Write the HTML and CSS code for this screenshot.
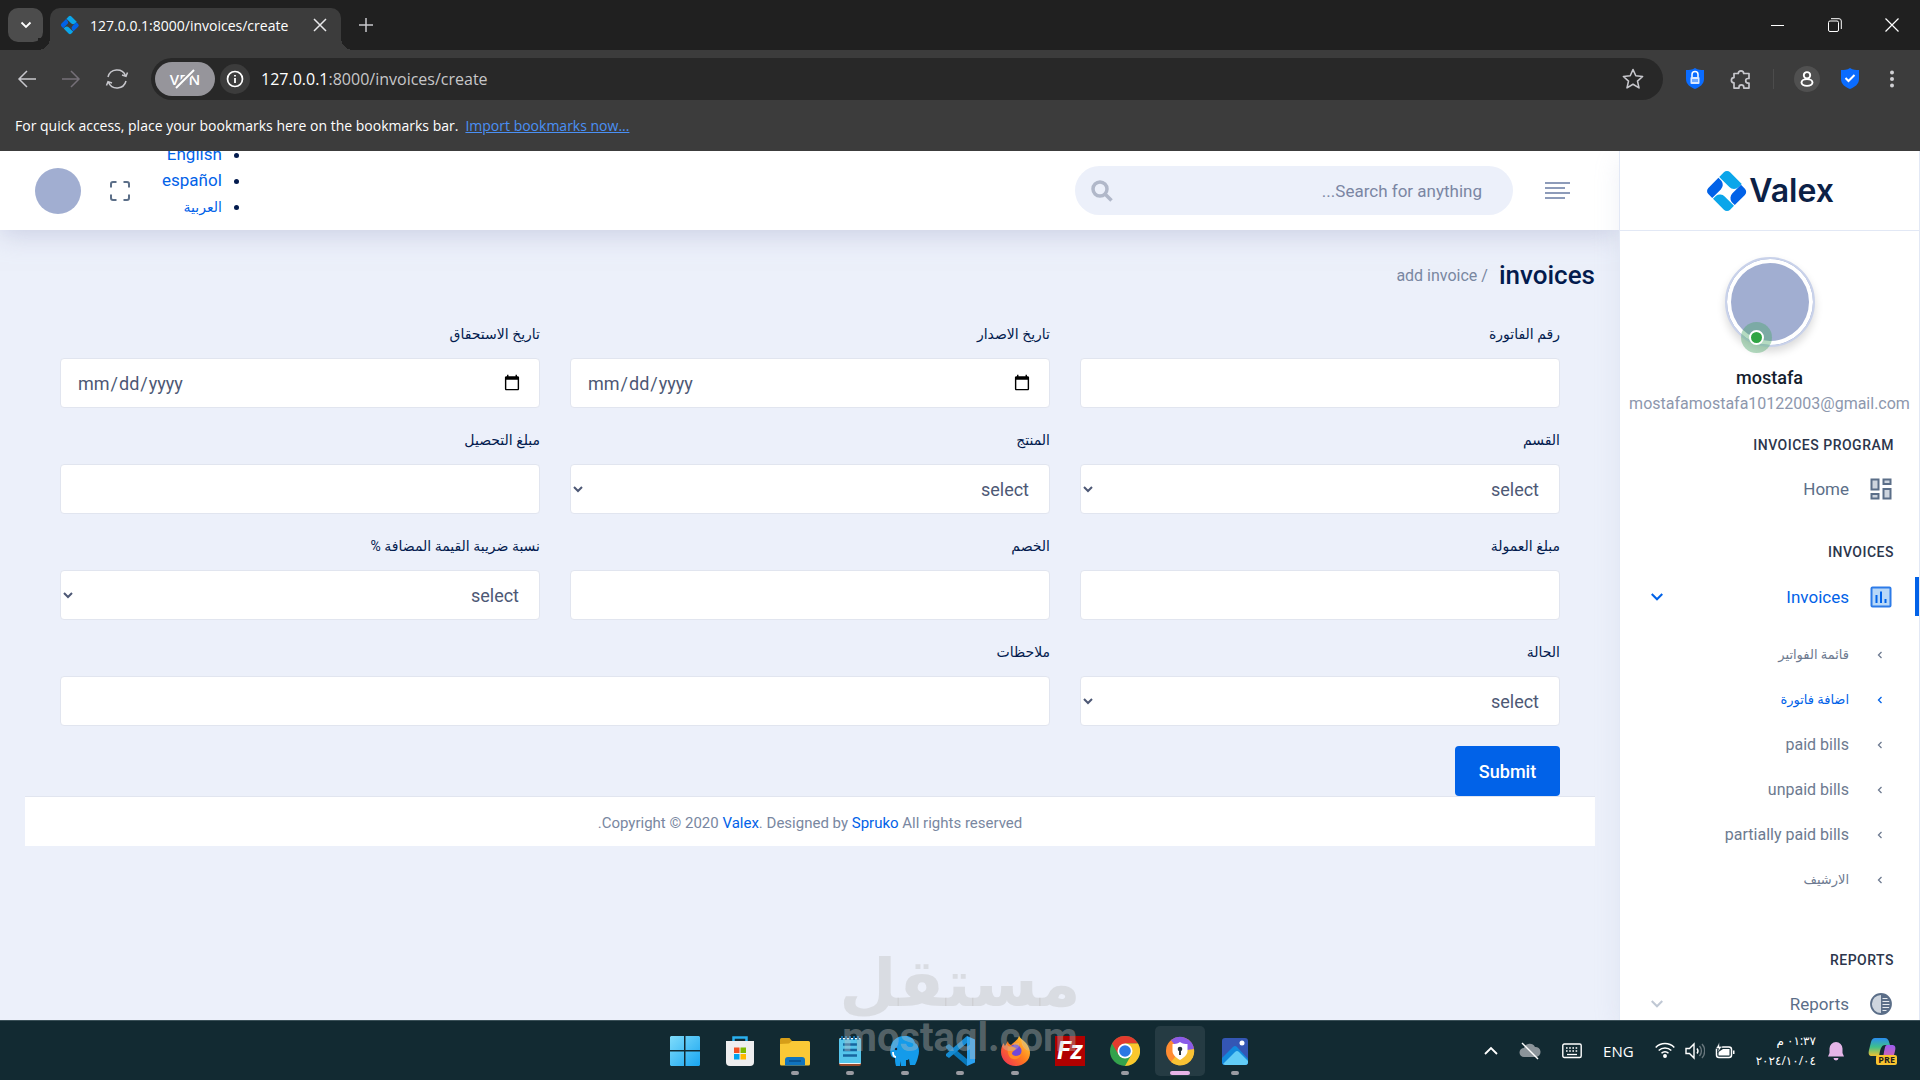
FILE: index.html
```html
<!DOCTYPE html>
<html lang="en">
<head>
    <meta charset="UTF-8">
    <meta name="viewport" content="width=device-width, initial-scale=1.0">
    <title>Invoices - Create</title>
    <link rel="stylesheet" href="styles.css">
</head>
<body>
    <svg class="defs" width="0" height="0" aria-hidden="true">
        <symbol id="valex" viewBox="0 0 40 40">
            <g transform="rotate(45 20 20)">
                <path fill="#0ba6ea" d="M10 6h15v4a6 6 0 0 1-6 6H6v-6a4 4 0 0 1 4-4z"/>
                <path fill="#0162e8" d="M25 7h5a4 4 0 0 1 4 4v13h-4a6 6 0 0 1-5-6z"/>
                <path fill="#0ba6ea" d="M34 25v5a4 4 0 0 1-4 4H16v-4a6 6 0 0 1 6-5z"/>
                <path fill="#0162e8" d="M6 17h4a6 6 0 0 1 5 6v11h-5a4 4 0 0 1-4-4z"/>
            </g>
        </symbol>
        <symbol id="chev-down" viewBox="0 0 12 12">
            <path d="M1.500 3.500 6 8l4.500-4.500" fill="none" stroke="currentColor" stroke-width="1.800"/>
        </symbol>
        <symbol id="chev-side" viewBox="0 0 6 10">
            <path d="M4.500 2 1.500 5l3 3" fill="none" stroke="currentColor" stroke-width="1.300"/>
        </symbol>
    </svg>

    <div class="browser">
        <div class="tab-strip">
            <button class="tab-menu" aria-label="Search tabs">
                <svg width="12" height="12"><use href="#chev-down"/></svg>
            </button>
            <div class="tab">
                <svg width="20" height="20"><use href="#valex"/></svg>
                <span>127.0.0.1:8000/invoices/create</span>
                <button aria-label="Close tab">
                    <svg width="14" height="14" viewBox="0 0 14 14"><path d="M1 1l12 12M13 1 1 13" stroke="#e8e8ea" stroke-width="1.500"/></svg>
                </button>
            </div>
            <button class="new-tab" aria-label="New tab">
                <svg width="14" height="14" viewBox="0 0 14 14"><path d="M7 0v14M0 7h14" stroke="#c8c8cc" stroke-width="1.500"/></svg>
            </button>
            <div class="window-controls">
                <button aria-label="Minimize"><svg width="14" height="14" viewBox="0 0 14 14"><path d="M0 7.500h13" stroke="#fff"/></svg></button>
                <button aria-label="Restore"><svg width="14" height="14" viewBox="0 0 14 14" fill="none" stroke="#fff"><rect x=".5" y="3" width="10" height="10.500" rx="1.500"/><path d="M3 .7h8a2.300 2.300 0 0 1 2.300 2.300v8"/></svg></button>
                <button aria-label="Close"><svg width="14" height="14" viewBox="0 0 14 14"><path d="M.5.5l13 13M13.500.5l-13 13" stroke="#fff" stroke-width="1.200"/></svg></button>
            </div>
        </div>
        <div class="toolbar">
            <div class="nav-buttons">
                <button aria-label="Back"><svg width="20" height="20" viewBox="0 0 20 20" fill="none" stroke="#c7c7cc" stroke-width="1.500"><path d="M19 10H2M10 2l-8 8 8 8"/></svg></button>
                <button aria-label="Forward"><svg width="20" height="20" viewBox="0 0 20 20" fill="none" stroke="#757078" stroke-width="1.500"><path d="M1 10h17M10 2l8 8-8 8"/></svg></button>
                <button aria-label="Reload"><svg width="24" height="24" viewBox="0 0 24 24" fill="none" stroke="#c7c7cc" stroke-width="1.500"><path d="M3 10a9.300 9.300 0 0 1 17.500-1.500M21 14a9.300 9.300 0 0 1-17.500 1.500M22.500 5.500 21 9.300 17 8M1.500 18.500 3 14.700 7 16"/></svg></button>
            </div>
            <div class="omnibox">
                <button class="vpn" aria-label="VPN is off">VPN
                    <svg class="vpn-slash" width="26" height="22" viewBox="0 0 26 22"><path d="M4 20 22 2" stroke="#96959b" stroke-width="5"/><path d="M4 20 22 2" stroke="#fff" stroke-width="2"/></svg>
                </button>
                <button class="site-info" aria-label="Site information">
                    <svg width="18" height="18" viewBox="0 0 18 18"><circle cx="9" cy="9" r="7.500" fill="none" stroke="#fff" stroke-width="1.700"/><path d="M9 8v5M9 5v1.600" stroke="#fff" stroke-width="1.800"/></svg>
                </button>
                <span class="url"><b>127.0.0.1</b>:8000/invoices/create</span>
                <svg class="star" width="24" height="24" viewBox="0 0 24 24"><path d="M12 2.500l2.800 6.300 6.800.7-5.100 4.600 1.500 6.800L12 17.300l-6 3.600 1.500-6.800L2.400 9.500l6.800-.7z" fill="none" stroke="#c7c7cc" stroke-width="1.600" stroke-linejoin="round"/></svg>
            </div>
            <div class="extensions">
                <svg width="20" height="22" viewBox="0 0 20 22"><path d="M10 0c3 2 6 2 9 2v9c0 5-4 8-9 10-5-2-9-5-9-10V2c3 0 6 0 9-2z" fill="#0a6cff"/><path d="M7 9V6.500a3 3 0 0 1 6 0V9" fill="none" stroke="#fff" stroke-width="1.500"/><rect x="5.500" y="9" width="9" height="7" rx="1" fill="#dce9ff"/><path d="M8 11v3M10 11v3M12 11v3" stroke="#0a6cff"/></svg>
                <svg class="puzzle" width="24" height="24" viewBox="0 0 24 24"><path d="M5 6.500h4.300a2.700 2.700 0 1 1 5.400 0H20v5h-1a2.300 2.300 0 0 0 0 4.600h1v5h-5.200v-.8a2.400 2.400 0 0 0-4.800 0v.8H5v-5.300a2.600 2.600 0 1 1 0-5.200z" fill="none" stroke="#c7c7cc" stroke-width="1.700" stroke-linejoin="round"/></svg>
                <i class="separator"></i>
                <span class="profile"><svg width="14" height="16" viewBox="0 0 14 16" fill="none" stroke="#fff" stroke-width="1.900"><circle cx="7" cy="4.300" r="3.200"/><ellipse cx="7" cy="11.500" rx="5.500" ry="3.400"/></svg></span>
                <svg width="20" height="22" viewBox="0 0 20 22"><path d="M10 0c3 2 6 2 9 2v9c0 5-4 8-9 10-5-2-9-5-9-10V2c3 0 6 0 9-2z" fill="#0a6cff"/><path d="M5.500 10l3 3 6-6" fill="none" stroke="#fff" stroke-width="2"/></svg>
                <svg class="kebab" width="4" height="18" viewBox="0 0 4 18" fill="#d0d0d4"><circle cx="2" cy="2.500" r="2"/><circle cx="2" cy="9" r="2"/><circle cx="2" cy="15.500" r="2"/></svg>
            </div>
        </div>
        <div class="bookmarks">
            <span>For quick access, place your bookmarks here on the bookmarks bar.</span>
            <a href="#">Import bookmarks now...</a>
        </div>
    </div>

    <div class="app" dir="rtl">
        <aside class="sidebar">
            <a class="logo" href="#" dir="ltr">
                <svg width="44" height="44"><use href="#valex"/></svg>
                <span>Valex</span>
            </a>
            <div class="user">
                <div class="user-avatar"><span class="status"></span></div>
                <h4>mostafa</h4>
                <span class="email">mostafamostafa10122003@gmail.com</span>
            </div>
            <nav class="side-menu">
                <h3>Invoices Program</h3>
                <a class="item" href="#">
                    <svg width="22" height="22" viewBox="0 0 22 22" fill="#ced5de" stroke="#5b6e88" stroke-width="2"><path d="M1.500 1.500h7v10h-7zM13.500 1.500h7v4.500h-7zM13.500 11h7v9.500h-7zM1.500 16h7v4.500h-7z"/></svg>
                    <span>Home</span>
                </a>
                <h3>Invoices</h3>
                <a class="item active" href="#">
                    <svg width="22" height="22" viewBox="0 0 22 22"><rect x="1.500" y="1.500" width="19" height="19" rx="1" fill="#b8d8f8" stroke="#2c7be8" stroke-width="2"/><path d="M6.500 9v8M11 5.500V17M15.500 13v4" stroke="#0162e8" stroke-width="2"/></svg>
                    <span>Invoices</span>
                    <svg class="toggle" width="14" height="14"><use href="#chev-down"/></svg>
                </a>
                <ul>
                    <li><a class="ar" href="#"><svg width="6" height="10"><use href="#chev-side"/></svg>قائمة الفواتير</a></li>
                    <li><a class="ar current" href="#"><svg width="6" height="10"><use href="#chev-side"/></svg>اضافة فاتورة</a></li>
                    <li><a href="#"><svg width="6" height="10"><use href="#chev-side"/></svg>paid bills</a></li>
                    <li><a href="#"><svg width="6" height="10"><use href="#chev-side"/></svg>unpaid bills</a></li>
                    <li><a href="#"><svg width="6" height="10"><use href="#chev-side"/></svg>partially paid bills</a></li>
                    <li><a class="ar" href="#"><svg width="6" height="10"><use href="#chev-side"/></svg>الارشيف</a></li>
                </ul>
                <h3>Reports</h3>
                <a class="item" href="#">
                    <svg width="22" height="22" viewBox="0 0 22 22"><circle cx="11" cy="11" r="10" fill="#ced5de"/><path d="M11 1a10 10 0 0 1 0 20z" fill="#5b6e88"/><path d="M12.500 5.500h5M12.500 8.500h7M12.500 11.500h7M12.500 14.500h7M12.500 17.500h4" stroke="#e6eaef" stroke-width="1.200"/><circle cx="11" cy="11" r="10" fill="none" stroke="#5b6e88" stroke-width="1.800"/></svg>
                    <span>Reports</span>
                    <svg class="toggle" width="14" height="14"><use href="#chev-down"/></svg>
                </a>
            </nav>
        </aside>

        <div class="main">
            <header class="main-header">
                <button class="menu-toggle" aria-label="Toggle menu">
                    <svg width="26" height="20" viewBox="0 0 26 20"><path d="M0 2h25M0 7h20M0 12h25M0 17h20" stroke="#8d9bb9" stroke-width="2"/></svg>
                </button>
                <div class="search">
                    <input type="search" placeholder="Search for anything..." aria-label="Search for anything">
                    <svg width="22" height="22" viewBox="0 0 22 22" fill="none" stroke="#b1b8c9" stroke-width="3.500"><circle cx="9" cy="9" r="7"/><path d="M14 14l6.500 6.500"/></svg>
                </div>
                <ul class="languages">
                    <li><a href="#">English</a></li>
                    <li><a href="#">español</a></li>
                    <li><a class="ar" href="#">العربية</a></li>
                </ul>
                <button class="fullscreen" aria-label="Full screen">
                    <svg width="22" height="22" viewBox="0 0 22 22" fill="none" stroke="#5b6e88" stroke-width="2"><path d="M7.500 2H4a2 2 0 0 0-2 2v3.500M14.500 2H18a2 2 0 0 1 2 2v3.500M20 14.500V18a2 2 0 0 1-2 2h-3.500M7.500 20H4a2 2 0 0 1-2-2v-3.500"/></svg>
                </button>
                <span class="header-avatar"></span>
            </header>

            <main class="content">
                <div class="breadcrumb">
                    <h1>invoices</h1>
                    <span>/ add invoice</span>
                </div>
                <form class="invoice-form">
                    <div class="field">
                        <label for="number">رقم الفاتورة</label>
                        <input type="text" id="number">
                    </div>
                    <div class="field">
                        <label for="invoice-date">تاريخ الاصدار</label>
                        <input type="date" id="invoice-date" dir="ltr">
                    </div>
                    <div class="field">
                        <label for="due-date">تاريخ الاستحقاق</label>
                        <input type="date" id="due-date" dir="ltr">
                    </div>
                    <div class="field">
                        <label for="section">القسم</label>
                        <select id="section"><option>select</option></select>
                    </div>
                    <div class="field">
                        <label for="product">المنتج</label>
                        <select id="product"><option>select</option></select>
                    </div>
                    <div class="field">
                        <label for="collection">مبلغ التحصيل</label>
                        <input type="text" id="collection">
                    </div>
                    <div class="field">
                        <label for="commission">مبلغ العمولة</label>
                        <input type="text" id="commission">
                    </div>
                    <div class="field">
                        <label for="discount">الخصم</label>
                        <input type="text" id="discount">
                    </div>
                    <div class="field">
                        <label for="vat">نسبة ضريبة القيمة المضافة %</label>
                        <select id="vat"><option>select</option></select>
                    </div>
                    <div class="field">
                        <label for="status">الحالة</label>
                        <select id="status"><option>select</option></select>
                    </div>
                    <div class="field wide">
                        <label for="note">ملاحظات</label>
                        <input type="text" id="note">
                    </div>
                    <button class="submit" type="submit">Submit</button>
                </form>
                <footer>Copyright © 2020 <a href="#">Valex</a>. Designed by <a href="#">Spruko</a> All rights reserved.</footer>
            </main>
        </div>
    </div>

    <div class="taskbar">
        <div class="apps">
            <button aria-label="Start"><svg width="30" height="30" viewBox="0 0 30 30"><defs><linearGradient id="win" x2="1" y2="1"><stop stop-color="#7fdcfb"/><stop offset="1" stop-color="#18a5f0"/></linearGradient></defs><path fill="url(#win)" d="M1 0h13v14H0V1zM15.500 0H29l1 1v13H15.500zM0 15.500h14V30H1l-1-1zM15.500 15.500H30V29l-1 1H15.500z"/></svg></button>
            <button aria-label="Store"><svg width="30" height="30" viewBox="0 0 30 30"><path d="M8.500 6V1.500h13V6" fill="none" stroke="#2ab0ee" stroke-width="2.500"/><path d="M1 5h28v21a4 4 0 0 1-4 4H5a4 4 0 0 1-4-4z" fill="#eeeeef"/><path fill="#f25022" d="M9 11.500h5.500V17H9z"/><path fill="#7fba00" d="M15.500 11.500H21V17h-5.500z"/><path fill="#00a4ef" d="M9 18h5.500v5.500H9z"/><path fill="#ffb900" d="M15.500 18H21v5.500h-5.500z"/></svg></button>
            <button class="running" aria-label="File Explorer"><svg width="30" height="30" viewBox="0 0 30 30"><path d="M0 3.500A1.500 1.500 0 0 1 1.500 2h8L12 5v3H0z" fill="#d69e18"/><path d="M0 8l9-.5L12 5h16.500A1.500 1.500 0 0 1 30 6.500V28a1.500 1.500 0 0 1-1.500 1.500h-27A1.500 1.500 0 0 1 0 28z" fill="#fac936"/><path d="M5 29.500V24a3 3 0 0 1 3-3h14a3 3 0 0 1 3 3v5.500z" fill="#1074bd"/><path d="M9 25h12" stroke="#094e8a" stroke-width="1.500"/></svg></button>
            <button class="running" aria-label="Notepad"><svg width="30" height="30" viewBox="0 0 30 30"><path d="M4 27h22v1a2 2 0 0 1-2 2H6a2 2 0 0 1-2-2z" fill="#9a4a2c"/><rect x="4" y="2" width="22" height="26" rx="1.500" fill="#f4f4f4"/><path d="M4 3h22v24H4z" fill="#55c5ec"/><path d="M8 8.500h14M8 14h14M8 19.500h14" stroke="#17659f" stroke-width="2.500"/><path d="M7 0v4M11 0v4M15 0v4M19 0v4M23 0v4" stroke="#126ba5" stroke-width="2"/></svg></button>
            <button class="running" aria-label="Database"><svg width="30" height="30" viewBox="0 0 30 30"><path fill="#149bea" d="M14 0c6-1 10 3 11 7 4 2 5 8 3 14-1 4-2 6-3 8h-5l-1-6c-1 1-2 1-3 1v6h-5l-1-5v5H6c-1-3-1-6-1-8-4 0-6-5-4-11C1 6 6 0 14 0z"/><path d="M3 16c0 3 1 5 3 5" fill="none" stroke="#fff" stroke-width="1.800"/><circle cx="6" cy="13" r="1.200" fill="#123"/></svg></button>
            <button class="running" aria-label="Visual Studio Code"><svg width="30" height="30" viewBox="0 0 30 30"><path d="M1 10l3-2 18 15v7L1 12z" fill="#0877b9"/><path d="M1 20l3 2L22 7V0L1 18z" fill="#158bd2"/><path d="M22 0l8 3.500v23L22 30z" fill="#2ba1f1"/></svg></button>
            <button class="running" aria-label="Firefox"><svg width="30" height="30" viewBox="0 0 30 30"><defs><linearGradient id="fox" x1="1" x2="0" y2="1"><stop stop-color="#ffe336"/><stop offset=".5" stop-color="#ff7a1e"/><stop offset="1" stop-color="#ee255d"/></linearGradient></defs><path fill="url(#fox)" d="M19 0c2 3 4 4 7 7 3 4 4 7 4 10 0 8-7 13-14.500 13S1 24 1 16c0-4 1-7 3-9 0 1 0 2 1 3l3-5c0 2 1 3 3 4 3-3 7-5 8-9z"/><circle cx="15" cy="15" r="6.500" fill="#7148d8"/><path d="M8 11c3-2 5 0 8 1-1 3-4 3-4 6 2 3 7 2 9 0-1 6-9 7-12 2-1-3-2-6-1-9z" fill="#ff8b24"/></svg></button>
            <button aria-label="FileZilla"><span class="filezilla">Fz</span></button>
            <button class="running" aria-label="Chrome"><svg width="30" height="30" viewBox="0 0 30 30"><circle cx="15" cy="15" r="15" fill="#34a24c"/><path d="M2 7.500A15 15 0 0 1 28 7.500H15l-6.500 11z" fill="#e33b2e"/><path d="M28 7.500A15 15 0 0 1 15 30l6.500-11.500L15 7.500z" fill="#fbc72c"/><circle cx="15" cy="15" r="7.500" fill="#fff"/><circle cx="15" cy="15" r="5.800" fill="#2b78e4"/></svg></button>
            <button class="running focused" aria-label="Secure Browser"><svg width="30" height="30" viewBox="0 0 30 30"><circle cx="15" cy="15" r="14" fill="#ff8c32"/><path d="M6 4.300A14 14 0 0 1 29 14l-14 1z" fill="#8a5be8"/><path d="M29 13a14 14 0 0 1-23 13l9-11z" fill="#f8c234"/><path d="M15 6c3 2 5 2 7.500 2v7c0 4-4 7-7.500 9-3.500-2-7.500-5-7.500-9V8c2.500 0 4.500 0 7.500-2z" fill="#fff"/><circle cx="15" cy="13" r="2.300" fill="#26323b"/><path d="M14 13h2v6h-2z" fill="#26323b"/></svg></button>
            <button class="running" aria-label="Photos"><svg width="30" height="30" viewBox="0 0 30 30"><rect x="2" y="2" width="26" height="27" rx="3" fill="#3456b4"/><path d="M2 22 13 11q2-2 4 0l11 12v3a3 3 0 0 1-3 3H5a3 3 0 0 1-3-3z" fill="#1289dc"/><path d="M3 28 15 16q2-2 4 0l9 9v1a3 3 0 0 1-3 3H5z" fill="#62ccf6"/><circle cx="22" cy="7" r="2.500" fill="#fff"/></svg></button>
        </div>
        <div class="tray">
            <svg width="14" height="10" viewBox="0 0 14 10"><path d="M1 8l6-6 6 6" fill="none" stroke="#fff" stroke-width="1.800"/></svg>
            <svg width="22" height="18" viewBox="0 0 22 18"><path d="M5 15a4.500 4.500 0 0 1 0-9 6 6 0 0 1 11-1 5 5 0 0 1 1 10z" fill="#8b949a"/><path d="M3 1l16 16" stroke="#fff" stroke-width="1.500"/></svg>
            <svg width="20" height="16" viewBox="0 0 20 16"><rect x=".8" y="1" width="18.400" height="13.500" rx="1.500" fill="none" stroke="#fff" stroke-width="1.400"/><path d="M4 5h12M4 8h12" stroke="#fff" stroke-width="1.600" stroke-dasharray="1.600 1.600"/><path d="M5 11.500h10" stroke="#fff" stroke-width="1.300"/></svg>
            <span class="lang">ENG</span>
            <div class="tray-status">
                <svg width="20" height="16" viewBox="0 0 20 16" fill="none" stroke="#fff" stroke-width="1.500"><path d="M.7 5.500a13 13 0 0 1 18.600 0M3.700 8.500a9 9 0 0 1 12.600 0M6.500 11.300a5 5 0 0 1 7 0"/><circle cx="10" cy="14" r="1.200" fill="#fff"/></svg>
                <svg width="20" height="18" viewBox="0 0 20 18" fill="none" stroke="#fff" stroke-width="1.400"><path d="M1 6.500h3.500L9 2v14l-4.500-4.500H1zM12 6.500a4 4 0 0 1 0 5"/><path d="M14.500 4a7.500 7.500 0 0 1 0 10M17 2a10.500 10.500 0 0 1 0 14" stroke="#68767c"/></svg>
                <svg width="20" height="18" viewBox="0 0 20 18"><rect x="1.500" y="5" width="15" height="10.500" rx="2.500" fill="none" stroke="#fff" stroke-width="1.500"/><path d="M8 7h6.500v6.500h-11V10z" fill="#fff"/><path d="M18 8.500h1.500v3.500H18z" fill="#fff"/><path d="M4.500 0 1 6.500h2.500L2.500 11 7 4.500H4.500z" fill="#fff" stroke="#122a32" stroke-width=".6"/></svg>
            </div>
            <div class="clock" dir="rtl">
                <span>٠١:٣٧ م</span>
                <span>٢٠٢٤/١٠/٠٤</span>
            </div>
            <svg width="18" height="20" viewBox="0 0 18 20"><path d="M1 15.500 2.500 12V7.500a6.500 6.500 0 0 1 13 0V12l1.500 3.500z" fill="#e5b5e8"/><path d="M6.500 17h5a2.500 2.500 0 0 1-5 0z" fill="#e5b5e8"/></svg>
            <div class="copilot">
                <svg width="28" height="28" viewBox="0 0 28 28"><defs><linearGradient id="cop" x2="0" y2="1"><stop stop-color="#2a8df0"/><stop offset=".5" stop-color="#3fc08a"/><stop offset="1" stop-color="#f0c030"/></linearGradient><linearGradient id="cop2" x2="0" y2="1"><stop stop-color="#9a5cf0"/><stop offset="1" stop-color="#f0688a"/></linearGradient></defs><path d="M7 1h10c3 0 4 3 5 7h-5c-3 0-4 3-5 6l-1 5H4c-3 0-4-2-3-6l2-8c1-3 2-4 4-4z" fill="url(#cop)"/><path d="M19 8h5c3 0 4 2 3 6l-2 8c-1 4-3 5-5 5H10c4-1 5-6 6-12 1-4 1-7 3-7z" fill="url(#cop2)"/></svg>
                <span>PRE</span>
            </div>
        </div>
    </div>

    <div class="watermark">
        <span class="watermark-ar" dir="rtl">مستقل</span>
        <span class="watermark-en">mostaql.com</span>
    </div>
</body>
</html>
```
FILE: styles.css
```css
* {
    box-sizing: border-box;
}

body {
    margin: 0;
    height: 100vh;
    display: flex;
    flex-direction: column;
    overflow: hidden;
    font-family: Roboto, "DejaVu Sans", sans-serif;
    font-size: 17px;
    color: #031b4e;
    background: #ecf0fa;
}

a {
    text-decoration: none;
    color: #0162e8;
}

button {
    padding: 0;
    border: 0;
    background: none;
    font-family: inherit;
    display: flex;
    align-items: center;
    justify-content: center;
}

svg {
    flex-shrink: 0;
}

.defs {
    position: absolute;
}

/* browser window */
.browser {
    flex-shrink: 0;
    background: #3c3c3c;
    color: #fff;
    font-family: "Open Sans", sans-serif;
    position: relative;
    z-index: 5;
}

.tab-strip {
    height: 50px;
    background: #202020;
    display: flex;
    align-items: center;
    padding-left: 8px;
}

.tab-menu {
    width: 35px;
    height: 34px;
    border-radius: 10px;
    background: #4c4c4c;
    color: #fff;
}

.tab {
    position: relative;
    align-self: flex-end;
    width: 291px;
    height: 42px;
    margin-left: 7px;
    padding: 0 14px 8px 10px;
    border-radius: 10px 10px 0 0;
    background: #3c3c3c;
    display: flex;
    align-items: center;
    gap: 10px;
    font-size: 14px;
    white-space: nowrap;
}

/* curved feet of the active tab */
.tab::before,
.tab::after {
    content: "";
    position: absolute;
    bottom: 0;
    width: 12px;
    height: 12px;
}

.tab::before {
    right: 100%;
    background: radial-gradient(circle at 0 0, #202020 12px, #3c3c3c 12px);
}

.tab::after {
    left: 100%;
    background: radial-gradient(circle at 100% 0, #202020 12px, #3c3c3c 12px);
}

.tab span {
    flex: 1;
}

.new-tab {
    margin-left: 18px;
}

.window-controls {
    margin-left: auto;
    display: flex;
}

.window-controls button {
    width: 57px;
    height: 48px;
}

.toolbar {
    height: 58px;
    display: flex;
    align-items: center;
    padding: 0 26px 0 17px;
}

.nav-buttons {
    display: flex;
    align-items: center;
    gap: 24px;
}

.omnibox {
    flex: 1;
    height: 42px;
    margin: 0 22px 0 22px;
    padding: 0 18px 0 4px;
    border-radius: 21px;
    background: #282828;
    display: flex;
    align-items: center;
    font-size: 16px;
}

.vpn {
    position: relative;
    width: 60px;
    height: 34px;
    border-radius: 17px;
    background: #96959b;
    color: #fff;
    font-size: 15px;
    font-weight: 600;
}

.vpn-slash {
    position: absolute;
    inset: 6px 17px;
}

.site-info,
.profile {
    width: 30px;
    height: 30px;
    border-radius: 50%;
    background: #3c3c3c;
}

.site-info {
    margin: 0 11px 0 5px;
}

.url {
    color: #c7c7c9;
}

.url b {
    font-weight: 400;
    color: #fff;
}

.star {
    margin-left: auto;
}

.extensions {
    display: flex;
    align-items: center;
    gap: 20px;
}

.puzzle {
    margin-left: 4px;
}

.kebab {
    margin-left: 10px;
}

.separator {
    width: 1px;
    height: 20px;
    background: #4c4c4c;
}

.profile {
    width: 26px;
    height: 26px;
    background: #505050;
    display: flex;
    align-items: center;
    justify-content: center;
}

.bookmarks {
    height: 43px;
    padding: 0 15px 8px;
    display: flex;
    align-items: center;
    gap: 7px;
    font-size: 14px;
}

.bookmarks a {
    color: #4a90f5;
    text-decoration: underline;
}

/* page */
.app {
    flex: 1;
    min-height: 0;
    overflow: hidden;
    display: flex;
}

.sidebar {
    width: 301px;
    flex-shrink: 0;
    background: #fff;
    border: solid #e2e8f5;
    border-width: 0 1px;
    box-shadow: 0 8px 24px rgba(168, 180, 208, 0.2);
    position: relative;
    z-index: 2;
}

.logo {
    height: 80px;
    border-bottom: 1px solid #e2e8f5;
    display: flex;
    align-items: center;
    justify-content: center;
    font-family: Inter, sans-serif;
    font-size: 32px;
    font-weight: 600;
    color: #0c2146;
}

.user {
    padding-top: 26px;
    display: flex;
    flex-direction: column;
    align-items: center;
}

.user-avatar {
    position: relative;
    width: 90px;
    height: 90px;
    border: 2px solid #c9d2ea;
    border-radius: 50%;
    background: #a1aed1;
    box-shadow: inset 0 0 0 4px #fff, 0 5px 8px rgba(0, 0, 0, 0.15);
}

.status {
    position: absolute;
    left: 22px;
    bottom: 0;
    width: 15px;
    height: 15px;
    border: 2px solid #fff;
    border-radius: 50%;
    background: #30a544;
    box-shadow: 0 0 0 8px rgba(70, 165, 100, 0.4);
}

.user h4 {
    margin: 19px 0 0;
    font-size: 18px;
    font-weight: 500;
    line-height: 24px;
    color: #14202e;
}

.email {
    font-size: 16px;
    line-height: 28px;
    color: #8d97ad;
}

.side-menu h3 {
    margin: 0;
    padding: 17px 25px 0;
    font-size: 14px;
    font-weight: 500;
    line-height: 20px;
    letter-spacing: 0.5px;
    text-transform: uppercase;
    color: #2c364c;
}

.item {
    height: 44px;
    margin: 12px 0 14px;
    padding: 0 27px 0 30px;
    display: flex;
    align-items: center;
    gap: 21px;
    color: #5b6e88;
}

.side-menu ul + h3 {
    padding-top: 48px;
}

.item.active {
    height: 39px;
    margin: 15px 0 16px;
    border-right: 4px solid #0162e8;
    padding-right: 23px;
    color: #0162e8;
}

.toggle {
    margin-right: auto;
    color: #c0c8d4;
}

.active .toggle {
    color: #0162e8;
}

.side-menu ul {
    margin: 0;
    padding: 0;
    list-style: none;
}

.side-menu li a {
    height: 45px;
    padding-right: 36px;
    display: flex;
    align-items: center;
    gap: 28px;
    font-size: 16px;
    color: #6d7a90;
}

.side-menu li a.ar {
    font-size: 13px;
}

.side-menu li a.current {
    color: #0162e8;
}

.main {
    flex: 1;
    min-width: 0;
}

.main-header {
    height: 79px;
    padding: 0 48px 0 35px;
    background: #fff;
    box-shadow: 0 4px 25px rgba(168, 174, 205, 0.5);
    display: flex;
    align-items: center;
}

.search {
    width: 438px;
    height: 49px;
    margin-right: 32px;
    padding: 0 31px 0 16px;
    border-radius: 25px;
    background: #ecf0fa;
    display: flex;
    align-items: center;
}

.search input {
    flex: 1;
    min-width: 0;
    border: 0;
    outline: 0;
    padding: 0;
    background: none;
    font-family: inherit;
    font-size: 17px;
}

.search input::placeholder {
    color: #7b86a3;
}

.languages {
    margin: 0 auto 22px 31px;
    padding: 0 40px 0 0;
    font-size: 17px;
    line-height: 26px;
}

.languages .ar {
    font-size: 14px;
}

.languages li {
    height: 26px;
}

.header-avatar {
    width: 46px;
    height: 46px;
    margin-right: 28px;
    border-radius: 50%;
    background: #a1aed1;
}

.content {
    padding: 28px 24px 0 25px;
}

.breadcrumb {
    display: flex;
    align-items: center;
    gap: 11px;
    font-size: 16px;
    color: #7987a1;
}

.breadcrumb h1 {
    margin: 0;
    font-size: 26px;
    font-weight: 500;
    line-height: 34px;
    color: #031b4e;
}

.invoice-form {
    padding: 30px 35px 0;
    display: grid;
    grid-template-columns: repeat(3, 1fr);
    gap: 20px 30px;
}

.field {
    display: flex;
    flex-direction: column;
    gap: 12px;
}

.field.wide {
    grid-column: span 2;
}

.field label {
    font-size: 14px;
    line-height: 24px;
}

.field input,
.field select {
    width: 100%;
    height: 50px;
    padding: 0 16px;
    border: 1px solid #e1e5ef;
    border-radius: 4px;
    background: #fff;
    font-family: inherit;
    font-size: 18px;
    color: #4d5875;
}

.submit {
    width: 105px;
    height: 50px;
    border-radius: 4px;
    background: #0162e8;
    color: #fff;
    font-size: 18px;
    font-weight: 500;
}

.content footer {
    padding: 13px 0 10px;
    border-top: 1px solid #e1e5ef;
    background: #fff;
    text-align: center;
    font-size: 15px;
    line-height: 26px;
    color: #7987a1;
}

/* windows taskbar */
.taskbar {
    flex-shrink: 0;
    height: 60px;
    padding: 0 24px;
    border-top: 1px solid #3a5058;
    background: #122a32;
    color: #fff;
    display: grid;
    grid-template-columns: 1fr auto 1fr;
    align-items: center;
    position: relative;
    z-index: 4;
}

.apps {
    grid-column: 2;
    display: flex;
    gap: 5px;
}

.apps button {
    position: relative;
    width: 50px;
    height: 50px;
    border-radius: 5px;
}

.apps .running::after {
    content: "";
    position: absolute;
    bottom: 1px;
    width: 8px;
    height: 4px;
    border-radius: 2px;
    background: #9a9ba2;
}

.apps .focused {
    background: #253b43;
}

.apps .focused::after {
    width: 20px;
    background: #e8b3e8;
}

.filezilla {
    width: 30px;
    height: 30px;
    background: #b10000;
    color: #fff;
    font-size: 25px;
    font-weight: 700;
    font-style: italic;
    line-height: 30px;
    text-align: center;
}

.tray {
    justify-self: end;
    display: flex;
    align-items: center;
    gap: 21px;
    font-family: "Open Sans", "DejaVu Sans", sans-serif;
}

.lang {
    font-size: 15px;
}

.tray-status {
    display: flex;
    gap: 10px;
}

.clock {
    margin-right: -10px;
    display: flex;
    flex-direction: column;
    font-size: 12px;
    line-height: 20px;
}

.copilot {
    position: relative;
    margin-left: 2px;
    height: 28px;
}

.copilot span {
    position: absolute;
    right: -1px;
    bottom: 0;
    padding: 0 2px;
    border-radius: 2px;
    background: #f9c32f;
    color: #1c1c1c;
    font-size: 9px;
    font-weight: 700;
    line-height: 10px;
}

.watermark {
    position: absolute;
    left: 50%;
    bottom: 20px;
    transform: translateX(-50%);
    z-index: 6;
    display: flex;
    flex-direction: column;
    align-items: center;
    font-family: "DejaVu Sans", sans-serif;
    font-weight: 700;
    color: rgba(190, 190, 190, 0.4);
    pointer-events: none;
}

.watermark-ar {
    font-size: 66px;
    line-height: 64px;
}

.watermark-en {
    font-family: Roboto, sans-serif;
    font-size: 40px;
    line-height: 44px;
}
```
